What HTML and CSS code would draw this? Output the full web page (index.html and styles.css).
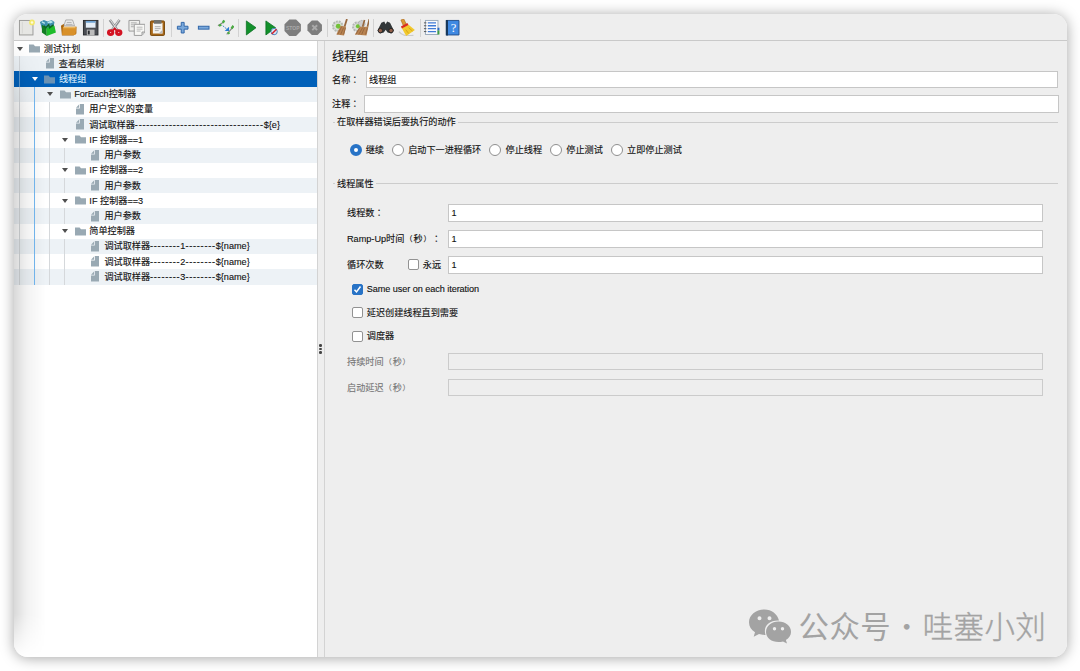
FILE: index.html
```html
<!DOCTYPE html>
<html lang="zh-CN">
<head>
<meta charset="utf-8">
<title>线程组</title>
<link rel="stylesheet" href="styles.css">
</head>
<body>
<svg width="0" height="0" class="defs">
  <symbol id="folder" viewBox="0 0 11 9"><path d="M0 0.5H4.6L6 2.2H11V8.6H0Z"/></symbol>
  <symbol id="doc" viewBox="0 0 8 11"><path d="M3.8 0H8V10.6H0V4.6H3.8Z"/><path d="M3 .6V3.8H0Z"/></symbol>
</svg>
<div class="window">
  <header class="toolbar">
    <svg class="ic" viewBox="0 0 18 18"><rect x="1.500" y="1.500" width="14" height="15" fill="#e6e6e3" stroke="#9a9a98"/><path d="M4.500 3v12" stroke="#d6d6d2"/><circle cx="14.500" cy="3.500" r="3" fill="#f2e86a"/><circle cx="14.500" cy="3.500" r="1.300" fill="#fffbd8"/></svg>
    <svg class="ic" viewBox="0 0 18 18"><path d="M1 3l4-2 4 1.500 4-1.500 3 2-1 6-12 1Z" fill="#3f8fae"/><path d="M3 3l3 1.500M9 4l4-2M11 4l3-1" stroke="#b5e5ed" stroke-width="1.300"/><path d="M3 6l5 3v8.500L3 14Z" fill="#127c22"/><path d="M8 9l8-2 1.500 7L8 17.500Z" fill="#1fbd2c"/><path d="M5 7l2 2 3-3 1 3 4-3" fill="none" stroke="#0a6a20" stroke-width="1.500"/></svg>
    <svg class="ic" viewBox="0 0 18 18"><path d="M4 7l2-6h7l2 6Z" fill="#eee" stroke="#999" stroke-width=".8"/><path d="M7 3.500h5M6 5.500h7" stroke="#aaa"/><path d="M1 7l3-2v4l13-1v7l-3 2H2Z" fill="#a8630c"/><path d="M3 8h14l-1 8.500H2Z" fill="#d9912a"/><path d="M3.500 9h12.500" stroke="#f2c46e"/></svg>
    <svg class="ic" viewBox="0 0 18 18"><rect x="1.500" y="1.500" width="15" height="15" fill="#4a4d53" stroke="#292c30"/><rect x="4" y="2" width="10" height="7" fill="#e5eef7"/><path d="M4 3h10" stroke="#6fa3d3" stroke-width="2"/><rect x="5" y="11" width="8" height="6" fill="#bcbcbc"/><rect x="6" y="12" width="2" height="4" fill="#292c30"/></svg>
    <i class="sep"></i>
    <svg class="ic" viewBox="0 0 18 18"><path d="M4 1l8 11M14 1L6 12" stroke="#8c8f91" stroke-width="2.800"/><path d="M4.500 1l7 10M13.500 1l-7 10" stroke="#dedede" stroke-width="1"/><ellipse cx="4.800" cy="14" rx="2.300" ry="2" fill="#eee" stroke="#d31322" stroke-width="3"/><ellipse cx="13.200" cy="14" rx="2.300" ry="2" fill="#eee" stroke="#d31322" stroke-width="3"/><path d="M6 13l3-3 3 3" fill="none" stroke="#d31322" stroke-width="2"/></svg>
    <svg class="ic" viewBox="0 0 18 18"><path d="M1 1.500h11v11H1Z" fill="#efefed" stroke="#999"/><path d="M3 4h6M3 6h3M3 8h3" stroke="#aaa"/><path d="M6.500 5.500h11v8l-3 3.500h-8Z" fill="#f7f7f5" stroke="#999"/><path d="M9 8.500h6M9 10.500h6M9 12.500h4" stroke="#b7b7b7"/><path d="M17.500 13.500h-3v3" fill="#ddd" stroke="#999"/></svg>
    <svg class="ic" viewBox="0 0 18 18"><rect x="1.500" y="2" width="14.500" height="15" rx="1" fill="#a8681a" stroke="#764609"/><rect x="4" y="4" width="10" height="11" fill="#f4f4f1"/><path d="M5 1h8v4H5Z" fill="#71716c"/><path d="M6 8h6M6 10h6M6 12h4" stroke="#aaa"/><path d="M14 11v4h-4Z" fill="#bbb"/></svg>
    <i class="sep"></i>
    <svg class="ic" viewBox="0 0 18 18"><path d="M7.500 3.500h3v4h4v3h-4v4h-3v-4h-4v-3h4Z" fill="#79a8db" stroke="#2f65a8"/></svg>
    <svg class="ic" viewBox="0 0 18 18"><rect x="3.500" y="7.500" width="11" height="3" fill="#79a8db" stroke="#2f65a8"/></svg>
    <svg class="ic" viewBox="0 0 18 18"><path d="M1 7l6-4M10 16l7-8" stroke="#888" stroke-width="1.200"/><path d="M6 4l1.500-2.500M2 7l2.500-1M11 15l2-1M15 10l2-3" stroke="#4baa42" stroke-width="2.400"/><path d="M6 7l6 5" stroke="#3b83d2" stroke-dasharray="2 1"/><path d="M12.500 8v4.500H8Z" fill="#2679d2"/></svg>
    <i class="sep"></i>
    <svg class="ic" viewBox="0 0 18 18"><path d="M4.500 2l10 7-10 7.500Z" fill="#12902b" stroke="#087020" stroke-width=".8"/></svg>
    <svg class="ic" viewBox="0 0 18 18"><path d="M3 2l10 7-10 7.500Z" fill="#12902b" stroke="#087020" stroke-width=".8"/><circle cx="11.500" cy="13" r="3.300" fill="#dbe6f2" stroke="#467fb8"/><path d="M9 15.500l5-5" stroke="#d3202d" stroke-width="1.500"/></svg>
    <svg class="ic" viewBox="0 0 18 18"><path d="M5.500.500h7l5 5v7l-5 5h-7l-5-5v-7Z" fill="#7e7e7e"/><text x="9" y="11.200" text-anchor="middle" class="stop">STOP</text></svg>
    <svg class="ic" viewBox="0 0 18 18"><path d="M6 1.500h6l4.500 4.500v6L12 16.500H6L1.500 12V6Z" fill="#7e7e7e"/><path d="M6.500 6.500l5 5M11.500 6.500l-5 5" stroke="#aaa" stroke-width="2"/></svg>
    <i class="sep"></i>
    <svg class="ic" viewBox="0 0 18 18"><circle cx="7" cy="7.500" r="5" fill="#d8ded5" stroke="#b5bab3" stroke-width="2" stroke-dasharray="2 1"/><circle cx="7.500" cy="7.500" r="2.500" fill="#72c238"/><path d="M16.500 0l-2.500 8" stroke="#97683f" stroke-width="1.800"/><path d="M10 7l5.500 1-2 9-8-1Z" fill="#b98351"/><path d="M11 8l-4 8M13 9l-3 7M15 9l-2 7" stroke="#97683f"/></svg>
    <svg class="ic" viewBox="0 0 18 18"><circle cx="5.500" cy="8" r="4.500" fill="#d8ded5" stroke="#b5b5b5" stroke-width="2" stroke-dasharray="2 1"/><circle cx="10" cy="5" r="3.500" fill="#ccc" stroke="#aaa" stroke-dasharray="2 1"/><circle cx="6" cy="7.500" r="2" fill="#72c238"/><path d="M13 1l-2 7M18 0l-2 8" stroke="#97683f" stroke-width="1.700"/><path d="M8 8l9 0-2 9-12-1Z" fill="#b98351"/><path d="M8 9l-4 7M11 9l-4 7M13 9l-3 7M16 9l-2 7" stroke="#97683f"/></svg>
    <i class="sep"></i>
    <svg class="ic" viewBox="0 0 18 18"><path d="M4.500 4l3-1.500 1.500 3 1.500-3 3 1.500 4 8-2.500 3-4-1-2-3-2 3-4 1-2.500-3Z" fill="#33383a"/><circle cx="3.500" cy="12" r="2.300" fill="#92604b" stroke="#242424"/><circle cx="14.500" cy="12" r="2.300" fill="#92604b" stroke="#242424"/></svg>
    <svg class="ic" viewBox="0 0 18 18"><path d="M1 13c3 4 9 5 15 4" stroke="#ccc" stroke-width="1.500" fill="none"/><path d="M3 1l3-1 2.500 5-3 2Z" fill="#dc9833" stroke="#a96718" stroke-width=".6"/><path d="M4 9.500c2-1 5-3 7-3.500l6.500 5.500-9 6Z" fill="#f2c92c"/><path d="M3.500 8.800l6.800-3.600" stroke="#db2c20" stroke-width="2.300"/><path d="M11 9l4 3.500M8 11l3 4" stroke="#cf9c16" stroke-width=".8"/></svg>
    <i class="sep"></i>
    <svg class="ic" viewBox="0 0 18 18"><rect x="2.500" y="1.500" width="13" height="14.500" fill="#fafafc" stroke="#9ab"/><path d="M5 4h8.500M5 7h8.500M5 10h8.500M5 13h8.500" stroke="#3f7bd6" stroke-width="1.400"/><path d="M1 4h2.500M1 7h2.500M1 10h2.500M1 13h2.500" stroke="#555"/><path d="M15 9h2v3h-2Z" fill="#2a68c4"/><path d="M15 12h2v4h-2Z" fill="#3d9e42"/></svg>
    <svg class="ic" viewBox="0 0 18 18"><path d="M2.500 1.500h13v15h-13Z" fill="#3f89e2" stroke="#23518e"/><path d="M3 1v16" stroke="#173759" stroke-width="2.200"/><text x="10" y="13" text-anchor="middle" class="help">?</text></svg>
  </header>
  <div class="main">
    <nav class="tree">
      <div class="row"><b class="arrow"></b><svg class="folder"><use href="#folder"/></svg>测试计划</div>
      <div class="row"><i></i><b></b><svg class="doc"><use href="#doc"/></svg>查看结果树</div>
      <div class="row selected"><i></i><b class="arrow"></b><svg class="folder"><use href="#folder"/></svg>线程组</div>
      <div class="row"><i></i><i class="active"></i><b class="arrow"></b><svg class="folder"><use href="#folder"/></svg>ForEach控制器</div>
      <div class="row"><i></i><i class="active"></i><i></i><b></b><svg class="doc"><use href="#doc"/></svg>用户定义的变量</div>
      <div class="row"><i></i><i class="active"></i><i></i><b></b><svg class="doc"><use href="#doc"/></svg>调试取样器<span class="dash">----------------------------------</span>${e}</div>
      <div class="row"><i></i><i class="active"></i><i></i><b class="arrow"></b><svg class="folder"><use href="#folder"/></svg>IF 控制器==1</div>
      <div class="row"><i></i><i class="active"></i><i></i><i></i><b></b><svg class="doc"><use href="#doc"/></svg>用户参数</div>
      <div class="row"><i></i><i class="active"></i><i></i><b class="arrow"></b><svg class="folder"><use href="#folder"/></svg>IF 控制器==2</div>
      <div class="row"><i></i><i class="active"></i><i></i><i></i><b></b><svg class="doc"><use href="#doc"/></svg>用户参数</div>
      <div class="row"><i></i><i class="active"></i><i></i><b class="arrow"></b><svg class="folder"><use href="#folder"/></svg>IF 控制器==3</div>
      <div class="row"><i></i><i class="active"></i><i></i><i></i><b></b><svg class="doc"><use href="#doc"/></svg>用户参数</div>
      <div class="row"><i></i><i class="active"></i><i></i><b class="arrow"></b><svg class="folder"><use href="#folder"/></svg>简单控制器</div>
      <div class="row"><i></i><i class="active"></i><i></i><i></i><b></b><svg class="doc"><use href="#doc"/></svg>调试取样器<span class="dash">--------</span>1<span class="dash">--------</span>${name}</div>
      <div class="row"><i></i><i class="active"></i><i></i><i></i><b></b><svg class="doc"><use href="#doc"/></svg>调试取样器<span class="dash">--------</span>2<span class="dash">--------</span>${name}</div>
      <div class="row"><i></i><i class="active"></i><i></i><i></i><b></b><svg class="doc"><use href="#doc"/></svg>调试取样器<span class="dash">--------</span>3<span class="dash">--------</span>${name}</div>
    </nav>
    <div class="splitter"><u></u><u></u><u></u></div>
    <section class="panel">
      <h1>线程组</h1>
      <div class="line name"><label>名称<span class="punct" lang="zh-TW">：</span></label><div class="input">线程组</div></div>
      <div class="line comment"><label>注释<span class="punct" lang="zh-TW">：</span></label><div class="input"></div></div>
      <div class="legend first">在取样器错误后要执行的动作</div>
      <div class="radios">
        <label><s class="on"></s>继续</label><label><s></s>启动下一进程循环</label><label><s></s>停止线程</label><label><s></s>停止测试</label><label><s></s>立即停止测试</label>
      </div>
      <div class="legend">线程属性</div>
      <div class="props">
        <div class="prop"><label>线程数<span class="punct" lang="zh-TW">：</span></label><div class="input">1</div></div>
        <div class="prop"><label>Ramp-Up时间<span class="paren" lang="zh-TW">（</span>秒<span class="paren" lang="zh-TW">）</span><span class="punct" lang="zh-TW">：</span></label><div class="input">1</div></div>
        <div class="prop"><label class="loops">循环次数<span class="forever"><em class="box"></em>永远</span></label><div class="input">1</div></div>
        <div class="check latin"><em class="box checked"><svg viewBox="0 0 11 11"><path d="M2.500 5.700l2 2.200 4-5.400" fill="none" stroke="#fff" stroke-width="1.500"/></svg></em>Same user on each iteration</div>
        <div class="check"><em class="box"></em>延迟创建线程直到需要</div>
        <div class="check"><em class="box"></em>调度器</div>
        <div class="prop disabled"><label>持续时间<span class="paren" lang="zh-TW">（</span>秒<span class="paren" lang="zh-TW">）</span></label><div class="input"></div></div>
        <div class="prop disabled"><label>启动延迟<span class="paren" lang="zh-TW">（</span>秒<span class="paren" lang="zh-TW">）</span></label><div class="input"></div></div>
      </div>
    </section>
  </div>
  <div class="shade"></div>
  <div class="watermark">
    <svg viewBox="0 0 42 35"><path fill-rule="evenodd" d="M15.500.5C7 .5 0 6 0 13.300c0 4.200 2.200 7.500 6 10l-1.300 4.500 5.300-2.700c2 .6 4 .9 6.500.8C13.800 17.500 20 11 30 11.500 28.500 5 22.500.5 15.500.5ZM10.500 7.300a2 2 0 1 1 0 4 2 2 0 0 1 0-4ZM20.500 7.300a2 2 0 1 1 0 4 2 2 0 0 1 0-4Z"/><path fill-rule="evenodd" d="M29.500 12.500c-7 0-12.500 4.600-12.500 10.500S22.500 33 29.500 33c1.500 0 3-.2 4.500-.6l4 2-1.100-3.500C40 29 42 26.300 42 22.900c0-5.800-5.500-10.400-12.500-10.400ZM25.500 18a1.700 1.700 0 1 1 0 3.400 1.700 1.700 0 0 1 0-3.400ZM33.500 18a1.700 1.700 0 1 1 0 3.400 1.700 1.700 0 0 1 0-3.400Z"/></svg>
    <span>公众号</span><span class="dot">·</span><span class="author">哇塞小刘</span>
  </div>
</div>
</body>
</html>
```
FILE: styles.css
```css
* { box-sizing: border-box; }
body {
  margin: 0;
  padding: 14px 13.5px;
  height: 671px;
  overflow: hidden;
  background: #fff;
  color: #111;
  font: 9.15px/12px "Liberation Sans", "Noto Sans CJK SC", sans-serif;
  -webkit-text-stroke: .12px currentColor;
}
.defs { position: absolute; }
.window {
  position: relative;
  height: 643px;
  display: flex;
  flex-direction: column;
  overflow: hidden;
  border-radius: 14px;
  background: #eee;
}
body::before {
  content: "";
  position: absolute;
  inset: 14px 13.5px 14px;
  border-radius: 14px;
  box-shadow: 0 1px 14px rgba(0, 0, 0, .36);
}
.toolbar {
  height: 27px;
  flex: none;
  display: flex;
  align-items: center;
  padding: 1px 0 0 4px;
  border-bottom: 1px solid #c9c9c9;
}
.ic { width: 17.400px; height: 17.400px; margin-right: 4px; flex: none; }
.sep { width: 1px; height: 18px; margin: 0 2.300px 0 .100px; background: #d2d2d2; }
.stop { font: bold 5.200px "Liberation Sans", sans-serif; fill: #aaa; }
.help { font: 13px "Liberation Serif", serif; fill: #fff; }

.main { flex: 1; display: flex; min-height: 0; }
.tree { width: 303px; background: #fff; }
.row {
  height: 15.220px;
  display: flex;
  align-items: center;
  white-space: pre;
}
.row:nth-child(even) { background: #edf2f6; }
.row i { width: 15.200px; height: 100%; flex: none; }
.row i::before { content: ""; display: block; width: 1px; height: 100%; margin-left: 5.300px; background: #d5d8db; }
.row i.active::before { background: #75b9f2; }
.row b { width: 15.800px; flex: none; }
.arrow::before {
  content: "";
  display: block;
  margin-left: 3px;
  width: 0;
  border: 3.300px solid transparent;
  border-top: 4px solid #4f4f4f;
  border-bottom: 0;
}
.folder { width: 11px; height: 9px; margin-right: 3.500px; fill: #99a9b3; flex: none; }
.doc { width: 8px; height: 11px; margin: 0 5.200px 0 1.200px; fill: #99a9b3; flex: none; }
.row.selected { background: #0060b9; color: #d8ebfa; }
.selected .folder { fill: #6b92b3; }
.selected .arrow::before { border-top-color: #fff; }
.selected i::before { background: #5c98cf; }
.dash { letter-spacing: .750px; }
.splitter {
  width: 8px;
  flex: none;
  border: solid #d3d3d3;
  border-width: 0 1px;
  background: #eee;
  display: flex;
  flex-direction: column;
  align-items: center;
  justify-content: center;
  gap: 1px;
}
.splitter u { width: 2.500px; height: 2.500px; border-radius: 50%; background: #444; }

.panel { flex: 1; padding: 8px 7.500px 0 7.500px; min-width: 0; }
h1 { margin: 0; font-size: 12.200px; font-weight: 400; line-height: 16px; }
.punct, .paren { font-family: "Noto Sans CJK TC", sans-serif; }
.paren {
  display: inline-block;
  width: 9.150px;
  font-size: 7.500px;
  text-align: center;
  text-spacing-trim: space-all;
}
.punct { display: inline-block; width: 9.150px; }
.line { display: flex; align-items: center; }
.input { height: 17.500px; flex: 1; border: 1px solid #c6c6c6; background: #fff; padding: 0 2.500px; line-height: 16px; }
.name { margin: 5.500px 1.500px 0 0; }
.name label { width: 33.500px; }
.comment { margin-top: 7px; }
.comment label { width: 32px; }
.legend { display: flex; align-items: center; gap: 2px; height: 12px; margin: 0 1px; }
.legend.first { margin-top: 3.500px; }
.legend::before { content: ""; width: 2px; height: 1px; background: #ccc; }
.legend::after { content: ""; flex: 1; height: 1px; background: #ccc; }
.radios { display: flex; height: 12px; margin: 16px 0 21.500px 17.500px; gap: 8.100px; }
.radios label { display: flex; align-items: center; gap: 4.200px; }
.radios s { width: 12px; height: 12px; border: 1px solid #8f8f8f; border-radius: 50%; background: #fff; }
.radios s.on { border: 4px solid #2873c6; }
.props { padding: 14.500px 16px 0 15px; }
.prop { display: flex; align-items: center; height: 17.500px; margin-bottom: 8.500px; }
.prop label { width: 101px; flex: none; }
.prop .loops { display: flex; align-items: center; justify-content: space-between; padding-right: 7px; }
.forever { display: flex; align-items: center; gap: 4px; }
.box { width: 11px; height: 11px; border: 1px solid #929292; border-radius: 2px; background: #fff; flex: none; }
.box.checked { background: #2873c6; border-color: #2873c6; }
.box svg { display: block; width: 11px; height: 11px; margin: -1px; }
.check { display: flex; align-items: center; gap: 4.300px; height: 23.600px; padding-left: 4.500px; }
.check.latin { margin-top: -4.500px; letter-spacing: -.070px; }
.check + .prop { margin-top: 4.500px; }
.disabled { color: #777; }
.disabled .input { background: #eee; border-color: #cbcbcb; }

.shade {
  position: absolute;
  inset: 27px auto 0 0;
  width: 32px;
  background: linear-gradient(90deg, rgba(0,0,0,.15), rgba(0,0,0,.05) 40%, transparent);
  mask-image: linear-gradient(transparent, #000 12%, #000 93%, transparent);
}
.watermark {
  position: absolute;
  left: 735.500px;
  top: 593px;
  display: flex;
  align-items: center;
  height: 38px;
  color: #a3a3a3;
  font: 30.400px/36px "Noto Sans CJK SC", sans-serif;
  letter-spacing: .500px;
  -webkit-text-stroke: 0;
}
.watermark span { margin-top: -2px; }
.watermark svg { width: 42px; height: 35px; margin-right: 7.500px; fill: #a3a3a3; }
.watermark .dot { width: 31.500px; text-align: center; font-weight: 300; }
.author { font-weight: 300; -webkit-text-stroke: .400px #a3a3a3; }
```
